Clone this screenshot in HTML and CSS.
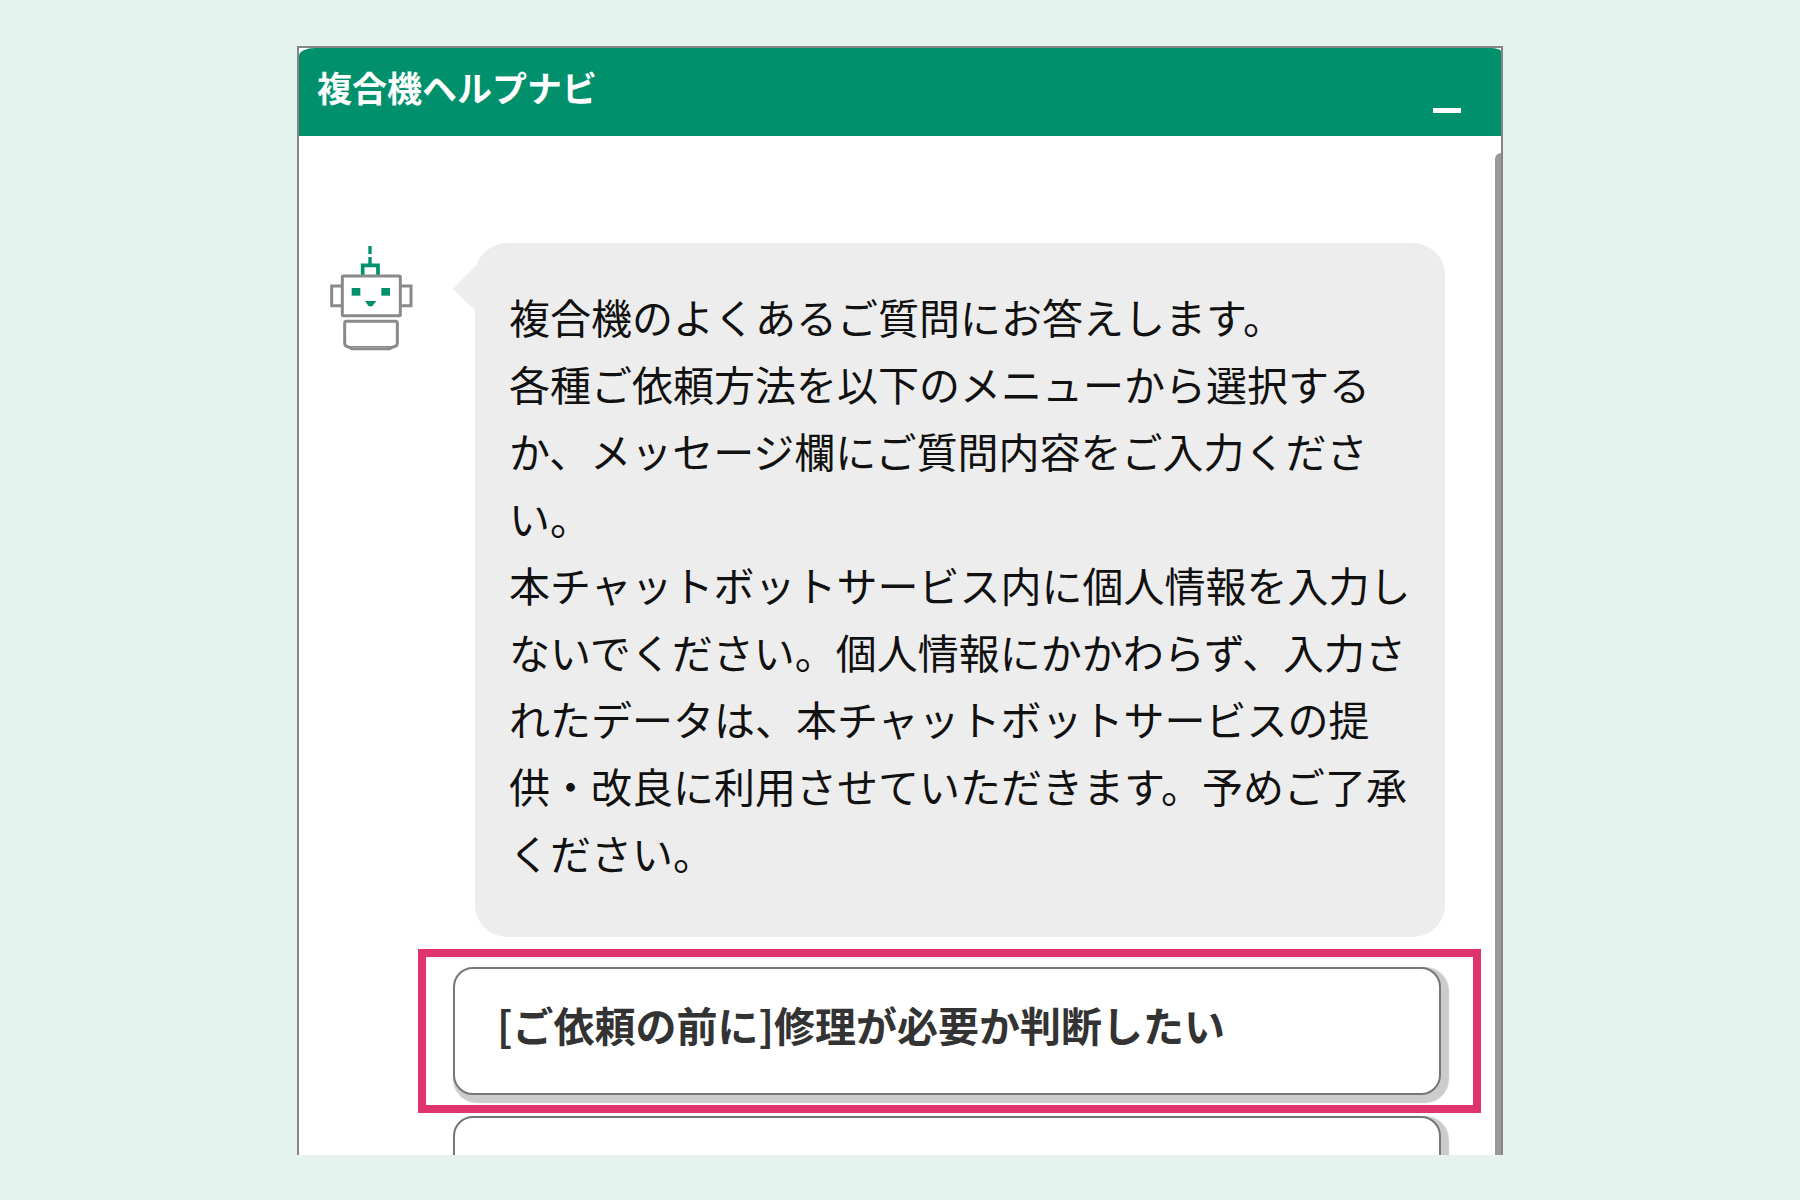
FILE: index.html
```html
<!DOCTYPE html>
<html lang="ja">
<head>
    <meta charset="UTF-8">
    <title>複合機ヘルプナビ</title>
    <link rel="stylesheet" href="styles.css">
</head>
<body>

<main class="chat">
    <header class="chat-header">
        <h1>複合機ヘルプナビ</h1>
        <button class="minimize" type="button" aria-label="最小化"><span></span></button>
    </header>
    <section class="chat-body">
        <div class="message">
            <svg class="robot" viewBox="57 45 252 318" aria-hidden="true">
                <g fill="none" stroke="#00916c" stroke-width="10">
                    <path d="M180 48V72M180 81V103"/>
                    <path d="M158 137V106H204V137" stroke-width="11"/>
                </g>
                <g fill="none" stroke="#8a8a8a" stroke-width="9">
                    <rect x="97" y="138" width="174" height="119" rx="3"/>
                    <path d="M97 168H65V227H97M271 168H303V227H271"/>
                    <path d="M109 274H256Q262 274 262 280V340Q262 348 252 350L238 356H126L113 350Q104 348 104 340V280Q104 274 109 274Z"/>
                    <path d="M113 350H252" stroke-width="4"/>
                </g>
                <g fill="#00916c">
                    <rect x="125" y="174" width="26" height="23"/>
                    <rect x="214" y="174" width="26" height="23"/>
                    <path d="M165 213H199L189 226Q181 233 174 226Z"/>
                </g>
            </svg>
            <div class="bubble">
                <p>複合機のよくあるご質問にお答えします。<br>各種ご依頼方法を以下のメニューから選択するか、メッセージ欄にご質問内容をご入力ください。<br>本チャットボットサービス内に個人情報を入力しないでください。個人情報にかかわらず、入力されたデータは、本チャットボットサービスの提供・改良に利用させていただきます。予めご了承ください。</p>
            </div>
        </div>
        <div class="options">
            <div class="highlight">
                <button class="option" type="button">[ご依頼の前に]修理が必要か判断したい</button>
            </div>
            <div class="plain">
                <button class="option" type="button" aria-label="次のメニュー"></button>
            </div>
        </div>
    </section>
    <div class="scroll-thumb"></div>
</main>
</body>
</html>
```
FILE: styles.css
```css
* {
    box-sizing: border-box;
}
body {
    display: flex;
    flex-direction: column;
    align-items: center;
    height: 100vh;
    margin: 0;
    padding: 46px 0 45px;
    background-color: #e4f3ee;
    font-family: "Noto Sans CJK JP", sans-serif;
}
.chat {
    position: relative;
    flex: 1;
    min-height: 0;
    width: 67%;
    overflow: hidden;
    border: 2px solid #858585;
    border-bottom: none;
    background-color: #fff;
}
.chat-header {
    display: flex;
    justify-content: space-between;
    height: 88px;
    padding: 0 40px 0 18px;
    border-radius: 16px 10px 0 0 / 8px 3px 0 0;
    background-color: #00916c;
}
h1 {
    margin: 13px 0 0;
    font-size: 35px;
    line-height: 52px;
    color: #fff;
}
.minimize {
    align-self: flex-end;
    padding: 16px 0 23px;
    border: none;
    background: none;
}
.minimize span {
    display: block;
    width: 28px;
    height: 5px;
    background-color: #fff;
}
.chat-body {
    padding-top: 107px;
}
.message {
    display: flex;
    align-items: flex-start;
    padding: 0 56px 0 30px;
}
.robot {
    flex: none;
    width: 84px;
    height: 106px;
    margin: 2px 62px 0 0;
}
.bubble {
    position: relative;
    flex: 1;
    padding: 40px 34px 51px;
    border-radius: 32px;
    background-color: #ededed;
}
.bubble::before {
    content: "";
    position: absolute;
    top: 21px;
    left: -22px;
    width: 30px;
    height: 50px;
    background-color: #ededed;
    clip-path: polygon(0 25px, 30px -6px, 30px 54px);
}
.bubble p {
    margin: 0;
    font-size: 41px;
    line-height: 67px;
    color: #111;
}
.options {
    padding: 12px 20px 0 119px;
}
.highlight {
    padding: 10px 32px 10px 27px;
    border: 8px solid #df346b;
}
.plain {
    padding: 3px 40px 0 35px;
}
.option {
    display: block;
    width: 100%;
    height: 128px;
    padding: 0 42px 14px;
    border: 2px solid #777;
    border-radius: 20px;
    background-color: #fff;
    box-shadow: 4px 4px 1px 4px #ccc;
    font-family: inherit;
    font-size: 41px;
    font-weight: bold;
    line-height: 67px;
    text-align: left;
    color: #333;
}
.scroll-thumb {
    position: absolute;
    top: 105px;
    right: 0;
    bottom: 0;
    width: 6px;
    border-radius: 6px 0 0 0;
    background-color: #999;
}
```
